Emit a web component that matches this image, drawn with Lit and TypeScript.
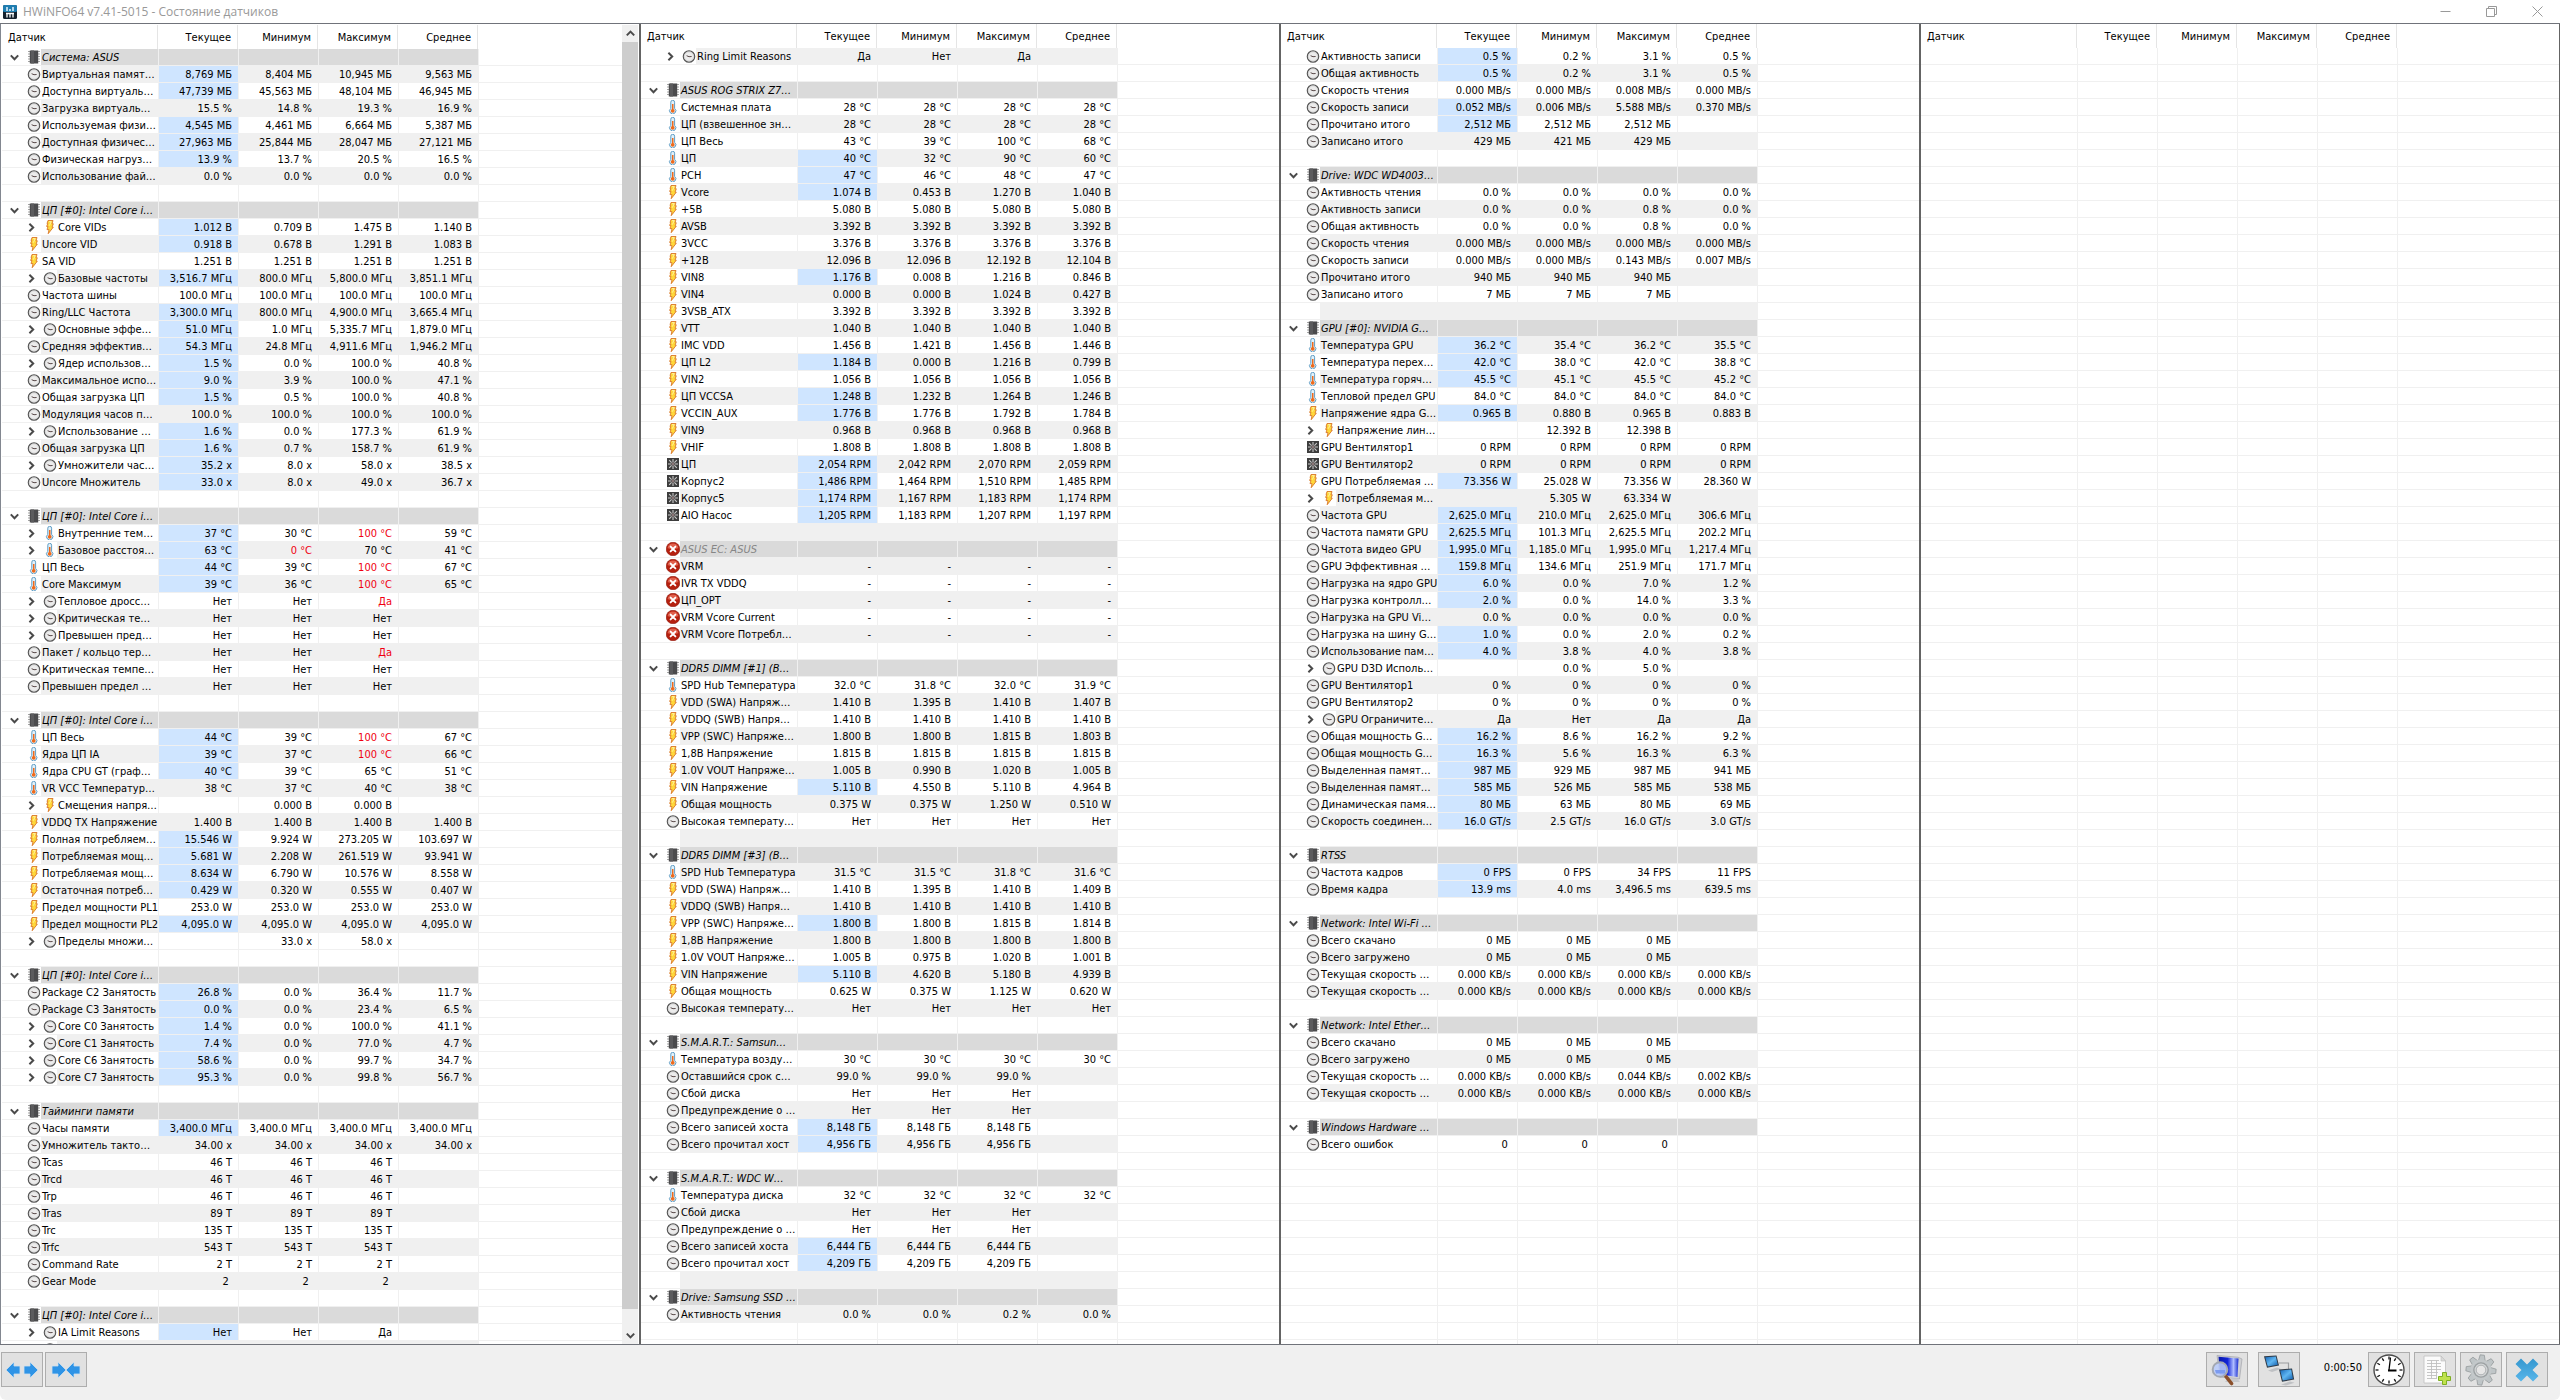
import { LitElement, html, svg, css, nothing } from "lit";
import { customElement, property, state } from "lit/decorators.js";
import { classMap } from "lit/directives/class-map.js";

type Kind = "group" | "gap" | "row";

interface Cell {
  text: string;
  hot: boolean;
  alert: boolean;
}

interface Row {
  kind: Kind;
  icon: string;
  name: string;
  child: boolean;
  off: boolean;
  stripe: boolean;
  cells: Cell[];
}

/*
 * Row notation, one row per line:
 *   "# name"            sensor group ("#x name" for a disconnected one)
 *   "-"                 separator row
 *   "c name | v | v"    reading; the letter selects the icon
 * ">" after the letter marks an expandable reading, "*" a freshly changed
 * value and "!" a value out of range. A leading "=" keeps the band of the
 * previous row, a leading "~" starts the list on a shaded band.
 */
const PANEL_1 = `
# Система: ASUS
c Виртуальная памят…|*8,769 МБ|8,404 МБ|10,945 МБ|9,563 МБ
c Доступна виртуаль…|*47,739 МБ|45,563 МБ|48,104 МБ|46,945 МБ
c Загрузка виртуаль…|15.5 %|14.8 %|19.3 %|16.9 %
c Используемая физи…|*4,545 МБ|4,461 МБ|6,664 МБ|5,387 МБ
c Доступная физичес…|*27,963 МБ|25,844 МБ|28,047 МБ|27,121 МБ
c Физическая нагруз…|*13.9 %|13.7 %|20.5 %|16.5 %
c Использование фай…|0.0 %|0.0 %|0.0 %|0.0 %
-
# ЦП [#0]: Intel Core i…
v> Core VIDs|*1.012 В|0.709 В|1.475 В|1.140 В
v Uncore VID|*0.918 В|0.678 В|1.291 В|1.083 В
v SA VID|1.251 В|1.251 В|1.251 В|1.251 В
c> Базовые частоты|*3,516.7 МГц|800.0 МГц|5,800.0 МГц|3,851.1 МГц
c Частота шины|100.0 МГц|100.0 МГц|100.0 МГц|100.0 МГц
c Ring/LLC Частота|*3,300.0 МГц|800.0 МГц|4,900.0 МГц|3,665.4 МГц
c> Основные эффе…|*51.0 МГц|1.0 МГц|5,335.7 МГц|1,879.0 МГц
c Средняя эффектив…|*54.3 МГц|24.8 МГц|4,911.6 МГц|1,946.2 МГц
c> Ядер использов…|*1.5 %|0.0 %|100.0 %|40.8 %
c Максимальное испо…|*9.0 %|3.9 %|100.0 %|47.1 %
c Общая загрузка ЦП|*1.5 %|0.5 %|100.0 %|40.8 %
c Модуляция часов п…|100.0 %|100.0 %|100.0 %|100.0 %
c> Использование …|*1.6 %|0.0 %|177.3 %|61.9 %
c Общая загрузка ЦП|*1.6 %|0.7 %|158.7 %|61.9 %
c> Умножители час…|*35.2 x|8.0 x|58.0 x|38.5 x
c Uncore Множитель|*33.0 x|8.0 x|49.0 x|36.7 x
-
# ЦП [#0]: Intel Core i…
t> Внутренние тем…|*37 °C|30 °C|!100 °C|59 °C
t> Базовое расстоя…|*63 °C|!0 °C|70 °C|41 °C
t ЦП Весь|*44 °C|39 °C|!100 °C|67 °C
t Core Максимум|*39 °C|36 °C|!100 °C|65 °C
c> Тепловое дросс…|Нет|Нет|!Да|
c> Критическая те…|Нет|Нет|Нет|
c> Превышен пред…|Нет|Нет|Нет|
c Пакет / кольцо тер…|Нет|Нет|!Да|
c Критическая темпе…|Нет|Нет|Нет|
c Превышен предел …|Нет|Нет|Нет|
-
# ЦП [#0]: Intel Core i…
t ЦП Весь|*44 °C|39 °C|!100 °C|67 °C
t Ядра ЦП IA|*39 °C|37 °C|!100 °C|66 °C
t Ядра CPU GT (граф…|*40 °C|39 °C|65 °C|51 °C
t VR VCC Температур…|38 °C|37 °C|40 °C|38 °C
v> Смещения напря…||0.000 В|0.000 В|
v VDDQ TX Напряжение|1.400 В|1.400 В|1.400 В|1.400 В
v Полная потребляем…|*15.546 W|9.924 W|273.205 W|103.697 W
v Потребляемая мощ…|*5.681 W|2.208 W|261.519 W|93.941 W
v Потребляемая мощ…|*8.634 W|6.790 W|10.576 W|8.558 W
v Остаточная потреб…|*0.429 W|0.320 W|0.555 W|0.407 W
v Предел мощности PL1|253.0 W|253.0 W|253.0 W|253.0 W
v Предел мощности PL2|*4,095.0 W|4,095.0 W|4,095.0 W|4,095.0 W
c> Пределы множи…||33.0 x|58.0 x|
=-
# ЦП [#0]: Intel Core i…
c Package C2 Занятость|*26.8 %|0.0 %|36.4 %|11.7 %
c Package C3 Занятость|*0.0 %|0.0 %|23.4 %|6.5 %
c> Core C0 Занятость|*1.4 %|0.0 %|100.0 %|41.1 %
c> Core C1 Занятость|*7.4 %|0.0 %|77.0 %|4.7 %
c> Core C6 Занятость|*58.6 %|0.0 %|99.7 %|34.7 %
c> Core C7 Занятость|*95.3 %|0.0 %|99.8 %|56.7 %
-
# Тайминги памяти
c Часы памяти|*3,400.0 МГц|3,400.0 МГц|3,400.0 МГц|3,400.0 МГц
c Умножитель такто…|34.00 x|34.00 x|34.00 x|34.00 x
c Tcas|46 T|46 T|46 T|
c Trcd|46 T|46 T|46 T|
c Trp|46 T|46 T|46 T|
c Tras|89 T|89 T|89 T|
c Trc|135 T|135 T|135 T|
c Trfc|543 T|543 T|543 T|
c Command Rate|2 T|2 T|2 T|
c Gear Mode|2_|2_|2_|
-
# ЦП [#0]: Intel Core i…
c> IA Limit Reasons|*Нет|Нет|Да|
c> ||||`;

const PANEL_2 = `
~c> Ring Limit Reasons|Да|Нет|Да|
-
# ASUS ROG STRIX Z7…
t Системная плата|28 °C|28 °C|28 °C|28 °C
t ЦП (взвешенное зн…|28 °C|28 °C|28 °C|28 °C
t ЦП Весь|43 °C|39 °C|100 °C|68 °C
t ЦП|*40 °C|32 °C|90 °C|60 °C
t PCH|*47 °C|46 °C|48 °C|47 °C
v Vcore|*1.074 В|0.453 В|1.270 В|1.040 В
v +5В|5.080 В|5.080 В|5.080 В|5.080 В
v AVSB|3.392 В|3.392 В|3.392 В|3.392 В
v 3VCC|3.376 В|3.376 В|3.376 В|3.376 В
v +12В|12.096 В|12.096 В|12.192 В|12.104 В
v VIN8|*1.176 В|0.008 В|1.216 В|0.846 В
v VIN4|0.000 В|0.000 В|1.024 В|0.427 В
v 3VSB_ATX|3.392 В|3.392 В|3.392 В|3.392 В
v VTT|1.040 В|1.040 В|1.040 В|1.040 В
v IMC VDD|1.456 В|1.421 В|1.456 В|1.446 В
v ЦП L2|*1.184 В|0.000 В|1.216 В|0.799 В
v VIN2|1.056 В|1.056 В|1.056 В|1.056 В
v ЦП VCCSA|*1.248 В|1.232 В|1.264 В|1.246 В
v VCCIN_AUX|*1.776 В|1.776 В|1.792 В|1.784 В
v VIN9|0.968 В|0.968 В|0.968 В|0.968 В
v VHIF|1.808 В|1.808 В|1.808 В|1.808 В
f ЦП|*2,054 RPM|2,042 RPM|2,070 RPM|2,059 RPM
f Корпус2|*1,486 RPM|1,464 RPM|1,510 RPM|1,485 RPM
f Корпус5|*1,174 RPM|1,167 RPM|1,183 RPM|1,174 RPM
f AIO Насос|*1,205 RPM|1,183 RPM|1,207 RPM|1,197 RPM
-
#x ASUS EC: ASUS
x VRM|-|-|-|-
x IVR TX VDDQ|-|-|-|-
x ЦП_OPT|-|-|-|-
x VRM Vcore Current|-|-|-|-
x VRM Vcore Потребл…|-|-|-|-
-
# DDR5 DIMM [#1] (B…
t SPD Hub Температура|32.0 °C|31.8 °C|32.0 °C|31.9 °C
v VDD (SWA) Напряж…|1.410 В|1.395 В|1.410 В|1.407 В
v VDDQ (SWB) Напря…|1.410 В|1.410 В|1.410 В|1.410 В
v VPP (SWC) Напряже…|1.800 В|1.800 В|1.815 В|1.803 В
v 1,8В Напряжение|1.815 В|1.815 В|1.815 В|1.815 В
v 1.0V VOUT Напряже…|1.005 В|0.990 В|1.020 В|1.005 В
v VIN Напряжение|*5.110 В|4.550 В|5.110 В|4.964 В
v Общая мощность|0.375 W|0.375 W|1.250 W|0.510 W
c Высокая температу…|Нет|Нет|Нет|Нет
-
# DDR5 DIMM [#3] (B…
t SPD Hub Температура|31.5 °C|31.5 °C|31.8 °C|31.6 °C
v VDD (SWA) Напряж…|1.410 В|1.395 В|1.410 В|1.409 В
v VDDQ (SWB) Напря…|1.410 В|1.410 В|1.410 В|1.410 В
v VPP (SWC) Напряже…|*1.800 В|1.800 В|1.815 В|1.814 В
v 1,8В Напряжение|1.800 В|1.800 В|1.800 В|1.800 В
v 1.0V VOUT Напряже…|1.005 В|0.975 В|1.020 В|1.001 В
v VIN Напряжение|*5.110 В|4.620 В|5.180 В|4.939 В
v Общая мощность|0.625 W|0.375 W|1.125 W|0.620 W
c Высокая температу…|Нет|Нет|Нет|Нет
-
# S.M.A.R.T.: Samsun…
t Температура возду…|30 °C|30 °C|30 °C|30 °C
c Оставшийся срок с…|99.0 %|99.0 %|99.0 %|
c Сбой диска|Нет|Нет|Нет|
c Предупреждение о …|Нет|Нет|Нет|
c Всего записей хоста|*8,148 ГБ|8,148 ГБ|8,148 ГБ|
c Всего прочитал хост|*4,956 ГБ|4,956 ГБ|4,956 ГБ|
-
# S.M.A.R.T.: WDC W…
t Температура диска|32 °C|32 °C|32 °C|32 °C
c Сбой диска|Нет|Нет|Нет|
c Предупреждение о …|Нет|Нет|Нет|
c Всего записей хоста|*6,444 ГБ|6,444 ГБ|6,444 ГБ|
c Всего прочитал хост|*4,209 ГБ|4,209 ГБ|4,209 ГБ|
-
# Drive: Samsung SSD …
c Активность чтения|0.0 %|0.0 %|0.2 %|0.0 %`;

const PANEL_3 = `
c Активность записи|*0.5 %|0.2 %|3.1 %|0.5 %
c Общая активность|*0.5 %|0.2 %|3.1 %|0.5 %
c Скорость чтения|0.000 MB/s|0.000 MB/s|0.008 MB/s|0.000 MB/s
c Скорость записи|*0.052 MB/s|0.006 MB/s|5.588 MB/s|0.370 MB/s
c Прочитано итого|*2,512 МБ|2,512 МБ|2,512 МБ|
c Записано итого|429 МБ|421 МБ|429 МБ|
-
# Drive: WDC WD4003…
c Активность чтения|0.0 %|0.0 %|0.0 %|0.0 %
c Активность записи|0.0 %|0.0 %|0.8 %|0.0 %
c Общая активность|0.0 %|0.0 %|0.8 %|0.0 %
c Скорость чтения|0.000 MB/s|0.000 MB/s|0.000 MB/s|0.000 MB/s
c Скорость записи|0.000 MB/s|0.000 MB/s|0.143 MB/s|0.007 MB/s
c Прочитано итого|940 МБ|940 МБ|940 МБ|
c Записано итого|7 МБ|7 МБ|7 МБ|
-
# GPU [#0]: NVIDIA G…
t Температура GPU|*36.2 °C|35.4 °C|36.2 °C|35.5 °C
t Температура перех…|*42.0 °C|38.0 °C|42.0 °C|38.8 °C
t Температура горяч…|*45.5 °C|45.1 °C|45.5 °C|45.2 °C
t Тепловой предел GPU|84.0 °C|84.0 °C|84.0 °C|84.0 °C
v Напряжение ядра G…|*0.965 В|0.880 В|0.965 В|0.883 В
v> Напряжение лин…||12.392 В|12.398 В|
=f GPU Вентилятор1|0 RPM|0 RPM|0 RPM|0 RPM
f GPU Вентилятор2|0 RPM|0 RPM|0 RPM|0 RPM
v GPU Потребляемая …|*73.356 W|25.028 W|73.356 W|28.360 W
v> Потребляемая м…||5.305 W|63.334 W|
=c Частота GPU|*2,625.0 МГц|210.0 МГц|2,625.0 МГц|306.6 МГц
c Частота памяти GPU|*2,625.5 МГц|101.3 МГц|2,625.5 МГц|202.2 МГц
c Частота видео GPU|*1,995.0 МГц|1,185.0 МГц|1,995.0 МГц|1,217.4 МГц
c GPU Эффективная …|*159.8 МГц|134.6 МГц|251.9 МГц|171.7 МГц
c Нагрузка на ядро GPU|*6.0 %|0.0 %|7.0 %|1.2 %
c Нагрузка контролл…|*2.0 %|0.0 %|14.0 %|3.3 %
c Нагрузка на GPU Vi…|0.0 %|0.0 %|0.0 %|0.0 %
c Нагрузка на шину G…|*1.0 %|0.0 %|2.0 %|0.2 %
c Использование пам…|*4.0 %|3.8 %|4.0 %|3.8 %
c> GPU D3D Исполь…||0.0 %|5.0 %|
c GPU Вентилятор1|0 %|0 %|0 %|0 %
c GPU Вентилятор2|0 %|0 %|0 %|0 %
c> GPU Ограничите…|Да|Нет|Да|Да
c Общая мощность G…|*16.2 %|8.6 %|16.2 %|9.2 %
c Общая мощность G…|*16.3 %|5.6 %|16.3 %|6.3 %
c Выделенная памят…|*987 МБ|929 МБ|987 МБ|941 МБ
c Выделенная памят…|*585 МБ|526 МБ|585 МБ|538 МБ
c Динамическая памя…|*80 МБ|63 МБ|80 МБ|69 МБ
c Скорость соединен…|*16.0 GT/s|2.5 GT/s|16.0 GT/s|3.0 GT/s
-
# RTSS
c Частота кадров|*0 FPS|0 FPS|34 FPS|11 FPS
c Время кадра|*13.9 ms|4.0 ms|3,496.5 ms|639.5 ms
-
# Network: Intel Wi-Fi …
c Всего скачано|0 МБ|0 МБ|0 МБ|
c Всего загружено|0 МБ|0 МБ|0 МБ|
c Текущая скорость …|0.000 KB/s|0.000 KB/s|0.000 KB/s|0.000 KB/s
c Текущая скорость …|0.000 KB/s|0.000 KB/s|0.000 KB/s|0.000 KB/s
-
# Network: Intel Ether…
c Всего скачано|0 МБ|0 МБ|0 МБ|
c Всего загружено|0 МБ|0 МБ|0 МБ|
c Текущая скорость …|0.000 KB/s|0.000 KB/s|0.044 KB/s|0.002 KB/s
c Текущая скорость …|0.000 KB/s|0.000 KB/s|0.000 KB/s|0.000 KB/s
-
# Windows Hardware …
c Всего ошибок|0_|0_|0_|`;

const HEADERS = ["Датчик", "Текущее", "Минимум", "Максимум", "Среднее"];

function parse(source: string): Row[] {
  let stripe = true;
  return source
    .split("\n")
    .filter((line) => line !== "")
    .map((raw): Row => {
      let line = raw;
      if (line.startsWith("=")) line = line.slice(1);
      else stripe = !stripe;
      if (line.startsWith("~")) {
        line = line.slice(1);
        stripe = true;
      }
      if (line === "-") {
        return { kind: "gap", icon: "", name: "", child: false, off: false, stripe, cells: [] };
      }
      const split = line.indexOf(" ");
      const mark = line.slice(0, split);
      const [name, ...values] = line.slice(split + 1).split("|");
      if (mark[0] === "#") {
        const off = mark[1] === "x";
        return { kind: "group", icon: off ? "x" : "g", name, child: false, off, stripe, cells: [] };
      }
      return {
        kind: "row",
        icon: mark[0],
        name,
        child: mark[1] === ">",
        off: false,
        stripe,
        cells: values.slice(0, 4).map((value) => ({
          hot: value.startsWith("*"),
          alert: value.startsWith("!"),
          text: value.replace(/^[*!]/, "").replace("_", "\u00a0"),
        })),
      };
    });
}

const ICONS: Record<string, unknown> = {
  c: svg`<circle cx="7" cy="7.500" r="5.700" fill="#ececec" stroke="#565656" stroke-width="1.200"/>
    <circle cx="7" cy="7.500" r="4.600" fill="none" stroke="#cfcfcf" stroke-width="0.700"/>
    <path d="M4.600 6.700 7 7.700 9.600 7.500" fill="none" stroke="#5a4a4a" stroke-width="1"/>`,
  v: svg`<path d="M5 0.500h5L9 3.800h1.300L9 7.200h1.300L5.200 13.700 6 9.600H4L5 6.400H3.600L4.800 3.600H4z" fill="#ffd83a" stroke="#d9772b" stroke-width="0.900"/>
    <path d="M6 1.600h2.200L6.400 5.600" fill="none" stroke="#fff6b8" stroke-width="0.800"/>`,
  t: svg`<path d="M4.800 2.200a1.900 1.900 0 0 1 3.800 0v6.200a3.100 3.100 0 1 1-3.800 0z" fill="#e2f1fa" stroke="#5f9cc4" stroke-width="1"/>
    <rect x="6" y="4" width="1.500" height="6" fill="#ee6a1c"/>
    <circle cx="6.700" cy="10.800" r="1.900" fill="#ee6a1c"/>`,
  g: svg`<path d="M1 1.500h12M1 4h12M1 6.500h12M1 9h12M1 11.500h12" stroke="#a4a4a4" stroke-width="1"/>
    <rect x="2.800" y="0.500" width="8.400" height="13" fill="#4b4b4d"/>
    <rect x="4" y="0.500" width="3" height="13" fill="#5b5b5d"/>`,
  f: svg`<rect x="1" y="1" width="12" height="12" fill="#3d3d3d"/>
    <path d="M7 2v3.400M7 12V8.600M2 7h3.400M12 7H8.600M3.200 3.200l2.400 2.400M10.800 10.800 8.400 8.400M10.800 3.200 8.400 5.600M3.200 10.800l2.400-2.400" stroke="#c9c9c9" stroke-width="1.100"/>
    <circle cx="7" cy="7" r="1.400" fill="#8a7676"/>`,
  x: svg`<circle cx="7" cy="7" r="6.800" fill="#b5200f" stroke="#8f1408" stroke-width="0.600"/>
    <path d="M1.600 6a5.500 5.500 0 0 1 10.800 0c-3 1.400-7.800 1.400-10.800 0z" fill="#e0604c"/>
    <path d="M4.600 4.600 9.400 9.400M9.400 4.600 4.600 9.400" stroke="#fff" stroke-width="1.900" stroke-linecap="round"/>`,
};

@customElement("sensor-panel")
class SensorPanel extends LitElement {
  @property({ type: String }) source = "";
  @property({ type: String }) caption = "";
  @property({ type: Boolean }) scroller = false;
  @state() private closed = new Set<number>();

  static styles = css`
    :host {
      display: flex;
      min-width: 0;
      overflow: hidden;
      background: #fff;
      color: #000;
      font-size: 11px;
    }
    .list {
      flex: 1;
      min-width: 0;
      display: flex;
      flex-direction: column;
      overflow: hidden;
      background-color: #fff;
      background-image: linear-gradient(#fff, #fff),
        repeating-linear-gradient(#fff0 0 16px, #f0f0f0 16px 17px),
        repeating-linear-gradient(90deg, #f0f0f0 0 1px, #fff0 1px 80px);
      background-size: 100% 24px, 100% 100%, 321px 100%;
      background-position: 0 0, 0 24px, 156px 0;
      background-repeat: no-repeat;
    }
    table {
      width: 100%;
      table-layout: fixed;
      border-spacing: 0;
    }
    .name-col {
      width: 156px;
    }
    .value-col {
      width: 80px;
    }
    th {
      box-sizing: border-box;
      height: 24px;
      padding: 1px 6px 0 0;
      border-right: 1px solid #e5e5e5;
      background: #fff;
      font-weight: 400;
      line-height: 16px;
      text-align: right;
      white-space: nowrap;
    }
    th:first-child {
      padding-left: 6px;
      text-align: left;
    }
    td {
      box-sizing: border-box;
      height: 17px;
      padding: 2px 6px 0 0;
      border-bottom: 1px solid #f0f0f0;
      line-height: 14px;
      text-align: right;
      white-space: nowrap;
    }
    .rest {
      border: 0;
    }
    .value {
      border-left: 1px solid #f0f0f0;
    }
    .stripe .value,
    .stripe .label {
      background: #f0f0f0;
    }
    .stripe .hot,
    .hot {
      background: #cfe5ff;
    }
    .alert {
      color: #f00012;
    }
    .group .value,
    .group .label {
      background: #dadada;
    }
    .group .label {
      font-style: italic;
    }
    .off .label {
      color: #868686;
    }
    .name {
      padding: 0;
      text-align: left;
    }
    .line {
      display: flex;
      height: 16px;
      padding-left: 25px;
    }
    .group .line {
      padding-left: 0;
    }
    .label {
      flex: 1;
      min-width: 0;
      padding: 2px 0 0 1px;
    }
    .icon {
      flex: none;
      width: 14px;
      height: 14px;
      margin-top: 1px;
    }
    button {
      display: flex;
      align-items: center;
      padding: 0;
      border: 0;
      background: none;
    }
    .fold {
      flex: none;
      width: 25px;
      padding-top: 1px;
      justify-content: center;
    }
    .expand {
      flex: none;
      width: 16px;
    }
    .fold svg,
    .expand svg,
    .scroll svg {
      width: 9px;
      height: 9px;
      fill: none;
      stroke: #4a4a4a;
      stroke-width: 2;
    }
    .scroll {
      flex: none;
      display: flex;
      flex-direction: column;
      width: 16px;
      margin-right: 1px;
      background: #f0f0f0;
    }
    .scroll button {
      height: 17px;
      justify-content: center;
    }
    .track {
      flex: 1;
    }
    .thumb {
      background: #cdcdcd;
    }
  `;

  private toggle(index: number) {
    const next = new Set(this.closed);
    if (!next.delete(index)) next.add(index);
    this.closed = next;
  }

  private nameCell(row: Row, index: number) {
    return html`<td class="name">
      <div class="line">
        ${row.kind === "group"
          ? html`<button
              class="fold"
              aria-label="Свернуть"
              aria-expanded=${!this.closed.has(index)}
              @click=${() => this.toggle(index)}
            >
              <svg viewBox="0 0 9 9"><path d="M0.800 2.400 4.500 6.200 8.200 2.400" /></svg>
            </button>`
          : nothing}
        ${row.child
          ? html`<button class="expand" aria-label="Развернуть" aria-expanded="false">
              <svg viewBox="0 0 9 9"><path d="M2.400 0.800 6.200 4.500 2.400 8.200" /></svg>
            </button>`
          : nothing}
        <svg class="icon" viewBox="0 0 14 14">${ICONS[row.icon]}</svg>
        <span class="label">${row.name}</span>
      </div>
    </td>`;
  }

  render() {
    const rows = parse(this.source);
    let hidden = false;
    return html`
      <div class="list">
        <table aria-label=${this.caption}>
          <colgroup>
            <col class="name-col" />
            ${[0, 1, 2, 3].map(() => html`<col class="value-col" />`)}
            <col />
          </colgroup>
          <thead>
            <tr>
              ${HEADERS.map((title) => html`<th scope="col">${title}</th>`)}
              <td class="rest"></td>
            </tr>
          </thead>
          <tbody>
            ${rows.map((row, index) => {
              if (row.kind === "group") hidden = this.closed.has(index);
              else if (hidden && row.kind === "row") return nothing;
              return html`<tr
                class=${classMap({
                  group: row.kind === "group",
                  off: row.off,
                  stripe: row.stripe,
                })}
              >
                ${row.kind === "gap"
                  ? html`<td class="name">
                      <div class="line"><span class="icon"></span><span class="label"></span></div>
                    </td>`
                  : this.nameCell(row, index)}
                ${[0, 1, 2, 3].map((column) => {
                  const cell = row.cells[column];
                  return html`<td
                    class=${classMap({ value: true, hot: !!cell?.hot, alert: !!cell?.alert })}
                  >${cell?.text ?? ""}</td>`;
                })}
                <td></td>
              </tr>`;
            })}
          </tbody>
        </table>
      </div>
      ${this.scroller
        ? html`<div class="scroll">
            <button aria-label="Вверх">
              <svg viewBox="0 0 9 9"><path d="M0.800 6.400 4.500 2.600 8.200 6.400" /></svg>
            </button>
            <div class="track"><div class="thumb" style="height: 98.6%"></div></div>
            <button aria-label="Вниз">
              <svg viewBox="0 0 9 9"><path d="M0.800 2.600 4.500 6.400 8.200 2.600" /></svg>
            </button>
          </div>`
        : nothing}
    `;
  }
}

const GEAR_TEETH = [0, 45, 90, 135, 180, 225, 270, 315];
const TICKS = [0, 30, 60, 90, 120, 150, 180, 210, 240, 270, 300, 330];

const expandIcon = html`<svg class="arrows" viewBox="0 0 34 18">
  <path d="M1 9 9 1v4h6v8H9v4zM33 9 25 1v4h-6v8h6v4z" fill="#2f94e6" stroke="#cfe0ee" stroke-width="0.800" />
</svg>`;

const collapseIcon = html`<svg class="arrows" viewBox="0 0 34 18">
  <path d="M17 9 9 1v4H3v8h6v4zM17 9 25 1v4h6v8h-6v4z" fill="#2f94e6" stroke="#cfe0ee" stroke-width="0.800" />
</svg>`;

const searchIcon = html`<svg class="tool" viewBox="0 0 32 32">
  <defs>
    <linearGradient id="screen" x1="0" y1="0" x2="1" y2="0">
      <stop offset="0" stop-color="#0b19a8" />
      <stop offset="0.450" stop-color="#1224d8" />
      <stop offset="0.750" stop-color="#aebdff" />
      <stop offset="1" stop-color="#1b2fd0" />
    </linearGradient>
  </defs>
  <path d="M6 1.500 27 3.200 31 5l-2.500 20L9 23z" fill="#cfd0d4" stroke="#9a9ca2" stroke-width="0.600" />
  <path d="M7.500 2.800 27.500 4.400 26.500 23 9 20.500z" fill="url(#screen)" />
  <path d="M17 24.500h9l3 3.500H14z" fill="#c7c9cc" />
  <path d="m15 22.500 5.500 7" stroke="#8a4f2a" stroke-width="3.600" stroke-linecap="round" />
  <circle cx="9" cy="15.500" r="7.300" fill="#b9ccfa" fill-opacity="0.880" stroke="#a3a8b2" stroke-width="2" />
  <path d="M4 16h10v3.500H5z" fill="#7c9bf0" />
</svg>`;

const networkIcon = html`<svg class="tool" viewBox="0 0 32 32">
  <defs>
    <linearGradient id="glass" x1="0" y1="0" x2="1" y2="1">
      <stop offset="0" stop-color="#1766b8" />
      <stop offset="0.500" stop-color="#5fb6f2" />
      <stop offset="1" stop-color="#0f58a6" />
    </linearGradient>
  </defs>
  <path d="M16 9h9.500v7" fill="none" stroke="#9c9ea0" stroke-width="1.200" />
  <path d="M1 2.200 13.500 1.500l2.500 10-12 2.300z" fill="#2f3a46" />
  <path d="M2.200 3.200 12.800 2.500l2 8.300-10 1.800z" fill="url(#glass)" />
  <path d="M5 16.500l9-3 4 1.500-9 3z" fill="#bfc1c4" />
  <path d="M16 15.500 29 14.500l2.200 11-12.200 2.300z" fill="#2f3a46" />
  <path d="M17.200 16.400 28.200 15.500l1.800 9.200-10.200 1.900z" fill="url(#glass)" />
  <path d="M18 30.500l9-3 4.500 1.200-8.500 2.800z" fill="#bfc1c4" />
</svg>`;

const clockIcon = html`<svg class="tool" viewBox="0 0 32 32">
  <circle cx="16" cy="16" r="15" fill="#fff" stroke="#4a4a4a" stroke-width="1.400" />
  ${TICKS.map(
    (angle) => svg`<path d="M16 2.500v3" stroke="#111" stroke-width="1.300" transform="rotate(${angle} 16 16)"/>`,
  )}
  <path d="M16 16 17.500 3.500" stroke="#000" stroke-width="1.300" />
  <path d="M15 16.500h8.500" stroke="#000" stroke-width="2" />
</svg>`;

const logIcon = html`<svg class="tool" viewBox="0 0 32 32">
  <path d="M5 2h17l4.500 5v22H5z" fill="#fbfbfb" stroke="#c4c4c4" stroke-width="0.900" />
  <path d="M22 2v5h4.500z" fill="#dcdcdc" stroke="#bdbdbd" stroke-width="0.600" />
  <path d="M8 6.500h12M8 9.500h14M8 12.500h14M8 15.500h14M8 18.500h11M8 21.500h10M8 24.500h10M12.500 6.500v18M17.500 6.500v18" stroke="#bfbfbf" stroke-width="0.900" />
  <path d="M23.500 18.500h4v4h4v4h-4v4h-4v-4h-4v-4h4z" fill="#bfe24c" stroke="#7fae24" stroke-width="1" />
</svg>`;

const gearIcon = html`<svg class="tool" viewBox="0 0 32 32">
  ${GEAR_TEETH.map(
    (angle) => svg`<path d="M12.500 7 13.600 1h4.200l1.500 6z" fill="#bfc5c7" stroke="#8f9496" stroke-width="0.700" transform="rotate(${angle + 6} 16 16)"/>`,
  )}
  <circle cx="16" cy="16" r="10.500" fill="#c3c8ca" />
  <circle cx="16" cy="16" r="7.800" fill="#9ba0a2" />
  <circle cx="16" cy="16" r="6.500" fill="#d3d6d7" />
  <circle cx="16" cy="16" r="4.800" fill="#e6e6e6" stroke="#a2a6a8" stroke-width="0.800" />
</svg>`;

const closeIcon = html`<svg class="tool" viewBox="0 0 32 32">
  <defs>
    <linearGradient id="cross" x1="0" y1="0" x2="0" y2="1">
      <stop offset="0" stop-color="#3597cf" />
      <stop offset="1" stop-color="#58b6ea" />
    </linearGradient>
  </defs>
  <path d="M10 4.500 16 10.500l6-6 5.500 5.500-6 6 6 6-5.500 5.500-6-6-6 6L4.500 22l6-6-6-6z" fill="url(#cross)" />
</svg>`;

@customElement("app-root")
class AppRoot extends LitElement {
  static styles = css`
    :host {
      display: flex;
      flex-direction: column;
      height: 100vh;
      background: #fff;
      font-family: "DejaVu Sans Condensed", "Noto Sans", sans-serif;
    }
    .titlebar {
      flex: none;
      display: flex;
      align-items: center;
      height: 23px;
      padding-left: 3px;
      color: #999;
      font: 12px/22px "Open Sans", "Noto Sans", sans-serif;
    }
    .logo {
      width: 14px;
      height: 14px;
      margin-right: 6px;
    }
    h1 {
      flex: 1;
      margin: 0;
      font: inherit;
    }
    .window-button {
      display: flex;
      align-items: center;
      justify-content: center;
      width: 46px;
      height: 20px;
      padding: 0;
      border: 0;
      background: none;
    }
    .window-button svg {
      width: 11px;
      height: 11px;
      fill: none;
      stroke: #999;
    }
    .panels {
      flex: 1;
      min-height: 0;
      display: grid;
      grid-template-columns: repeat(4, 1fr);
      grid-template-rows: 100%;
      border-top: 1px solid #70737a;
      border-bottom: 1px solid #70737a;
    }
    sensor-panel {
      border-left: 1px solid #646464;
      border-right: 1px solid #646464;
    }
    sensor-panel:first-child {
      border-left-color: #828790;
      padding: 1px 0 0 1px;
    }
    .toolbar {
      flex: none;
      display: flex;
      align-items: center;
      justify-content: space-between;
      height: 55px;
      padding: 0 12px 6px 1px;
      box-sizing: border-box;
      background: #f0f0f0;
      border-radius: 0 0 6px 6px;
      font-size: 11px;
    }
    .side {
      display: flex;
      align-items: center;
      gap: 4px;
    }
    .side button {
      display: flex;
      align-items: center;
      justify-content: center;
      box-sizing: border-box;
      width: 42px;
      height: 35px;
      padding: 0;
      border: 1px solid #adadad;
      background: #e1e1e1;
    }
    .columns {
      gap: 2px;
    }
    .pair {
      gap: 10px;
    }
    .timer {
      padding: 0 2px 4px 20px;
    }
    .arrows {
      width: 34px;
      height: 18px;
    }
    .tool {
      width: 32px;
      height: 32px;
    }
  `;

  render() {
    return html`
      <header class="titlebar">
        <svg class="logo" viewBox="0 0 14 14">
          <rect width="14" height="14" rx="1.500" fill="#14202c" />
          <rect width="14" height="7" rx="1.500" fill="#1f7db0" />
          <path d="M4 2v4M7 4v2M10 2v4" stroke="#e8f6ff" stroke-width="1.500" />
          <path d="M3 8.500h8M4 8.500v4M7 8.500v4M10 8.500v4" stroke="#fff" stroke-width="1.300" />
        </svg>
        <h1>HWiNFO64 v7.41-5015 - Состояние датчиков</h1>
        <button class="window-button" aria-label="Свернуть окно">
          <svg viewBox="0 0 11 11"><path d="M0.500 5.500h10" /></svg>
        </button>
        <button class="window-button" aria-label="Восстановить">
          <svg viewBox="0 0 11 11"><path d="M0.500 2.500h8v8h-8zM2.500 2.500v-2h8v8h-2" /></svg>
        </button>
        <button class="window-button" aria-label="Закрыть окно">
          <svg viewBox="0 0 11 11"><path d="m0.500 0.500 10 10m0-10-10 10" /></svg>
        </button>
      </header>
      <main class="panels">
        <sensor-panel .source=${PANEL_1} caption="Датчики 1" scroller></sensor-panel>
        <sensor-panel .source=${PANEL_2} caption="Датчики 2"></sensor-panel>
        <sensor-panel .source=${PANEL_3} caption="Датчики 3"></sensor-panel>
        <sensor-panel caption="Датчики 4"></sensor-panel>
      </main>
      <footer class="toolbar">
        <div class="side columns">
          <button aria-label="Развернуть столбцы">${expandIcon}</button>
          <button aria-label="Сузить столбцы">${collapseIcon}</button>
        </div>
        <div class="side">
          <div class="side pair">
            <button aria-label="Поиск">${searchIcon}</button>
            <button aria-label="Сеть">${networkIcon}</button>
          </div>
          <span class="timer">0:00:50</span>
          <button aria-label="Часы">${clockIcon}</button>
          <button aria-label="Журнал">${logIcon}</button>
          <button aria-label="Настройки">${gearIcon}</button>
          <button aria-label="Закрыть">${closeIcon}</button>
        </div>
      </footer>
    `;
  }
}
